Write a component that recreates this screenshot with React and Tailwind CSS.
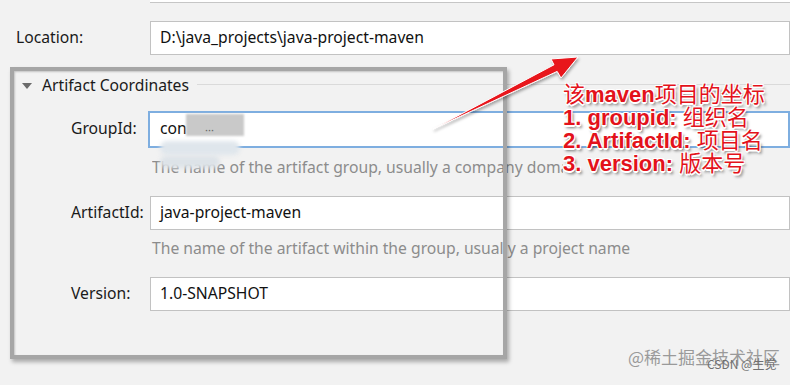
import * as React from 'react';

function Field({ label, value, focused, children }) {
  return (
    <div className="flex items-center h-[34px]">
      <div className="w-[79px] shrink-0 pl-[71px] box-content text-[15.7px] text-[#1a1a1a] whitespace-nowrap">{label}</div>
      <div
        className={
          focused
            ? 'relative flex-1 h-[37px] -ml-[2px] bg-white border-2 border-[#7eaee0] flex items-center pl-[10px] text-[15.7px] text-[#111]'
            : 'relative flex-1 h-[34px] bg-white border border-[#c2c2c2] flex items-center pl-[9px] text-[15.7px] text-[#111]'
        }
      >
        {value}
        {children}
      </div>
    </div>
  );
}

function Help({ text, clipped }) {
  return (
    <div
      className={
        clipped
          ? 'ml-[152px] w-[411px] overflow-hidden h-[20px] flex items-center text-[15.7px] text-[#8c8c8c] whitespace-nowrap'
          : 'ml-[152px] h-[20px] flex items-center text-[15.7px] text-[#8c8c8c] whitespace-nowrap'
      }
    >
      {text}
    </div>
  );
}

const redShadow =
  'text-[#e3121b] [text-shadow:-1px_-1px_0_#fff,1px_-1px_0_#fff,-1px_1px_0_#fff,1px_1px_0_#fff,0_2px_0_#fff,2px_3px_3px_rgba(0,0,0,0.55)]';

export default function App() {
  return (
    <div
      className="relative w-[790px] h-[385px] overflow-hidden bg-[#f2f2f2]"
      style={{ fontFamily: '"Noto Sans", "Open Sans", "Noto Sans CJK SC", sans-serif' }}
    >
      <div className="ml-[150px] h-[3px] bg-white border-b border-[#c6c6c6]" />

      <div className="flex items-center h-[34px] mt-[18px]">
        <div className="w-[150px] shrink-0 pl-[16px] text-[15.7px] text-[#1a1a1a]">Location:</div>
        <div className="flex-1 h-[34px] bg-white border border-[#c2c2c2] flex items-center pl-[9px] text-[15.7px] text-[#111] whitespace-nowrap">
          D:\java_projects\java-project-maven
        </div>
      </div>

      <div className="flex items-center h-[22px] mt-[20px]">
        <div className="w-[42px] shrink-0 pl-[22px]">
          <div className="w-0 h-0 border-l-[5px] border-r-[5px] border-t-[6px] border-l-transparent border-r-transparent border-t-[#6b6b6b]" />
        </div>
        <div className="text-[15.7px] text-[#1a1a1a] whitespace-nowrap">Artifact Coordinates</div>
        <div className="flex-1 ml-[8px] mb-[3px] h-px bg-[#dadada]" />
      </div>

      <div className="mt-[15px]">
        <Field label="GroupId:" value="con" focused>
          <div className="absolute left-[36px] top-[1px] w-[58px] h-[22px] bg-[#c9c9c9] blur-[1px]" />
          <div className="absolute left-[55px] top-[9px] text-[11px] text-[#666]">···</div>
          <div className="absolute left-[10px] top-[28px] w-[80px] h-[14px] rounded-full bg-[#dfe6ec] blur-[2px]" />
        </Field>
      </div>
      <div className="relative mt-[12px]">
        <div className="absolute left-[160px] -top-[2px] w-[60px] h-[12px] rounded-full bg-[#dde3e8] blur-[2px]" />
        <Help text="The name of the artifact group, usually a company domain" clipped />
      </div>

      <div className="mt-[18px]">
        <Field label="ArtifactId:" value="java-project-maven" />
      </div>
      <div className="mt-[9px]">
        <Help text="The name of the artifact within the group, usually a project name" />
      </div>

      <div className="mt-[18px]">
        <Field label="Version:" value="1.0-SNAPSHOT" />
      </div>

      {/* annotation overlay */}
      <div className="absolute left-[10px] top-[67px] w-[497px] h-[292px] border-[4px] border-[#a6a6a6] shadow-[2px_3px_4px_rgba(0,0,0,0.3),inset_1px_1px_2px_rgba(0,0,0,0.2)]" />

      <svg className="absolute left-0 top-0" width="790" height="385">
        <defs>
          <filter id="sh" x="-10%" y="-10%" width="130%" height="130%">
            <feDropShadow dx="1" dy="2" stdDeviation="1.5" floodColor="#000" floodOpacity="0.35" />
          </filter>
        </defs>
        <polygon
          points="433,129 554,64.8 551,59 578,57 561,78 557.2,71.4"
          fill="#e8141c"
          stroke="#fff"
          strokeWidth="1"
          strokeLinejoin="round"
          filter="url(#sh)"
        />
      </svg>

      <div
        className={'absolute left-[563px] top-[83px] text-[22px] leading-[23px] font-bold whitespace-nowrap ' + redShadow}
        style={{ fontFamily: '"Liberation Sans", "Noto Sans CJK SC", sans-serif' }}
      >
        <div>
          <span className="font-normal">该</span>maven<span className="font-normal">项目的坐标</span>
        </div>
        <div>
          1. groupid: <span className="font-normal">组织名</span>
        </div>
        <div>
          2. ArtifactId: <span className="font-normal">项目名</span>
        </div>
        <div>
          3. version: <span className="font-normal">版本号</span>
        </div>
      </div>

      <div
        className="absolute left-[628px] top-[344px] text-[17px] text-[#9a9a9a] whitespace-nowrap"
        style={{ fontFamily: '"Noto Sans CJK SC", sans-serif' }}
      >
        @稀土掘金技术社区
      </div>
      <div
        className="absolute left-[707px] top-[355px] text-[12px] text-[#707070] whitespace-nowrap"
        style={{ fontFamily: '"Noto Sans CJK SC", sans-serif' }}
      >
        CSDN @生觉
      </div>
    </div>
  );
}
